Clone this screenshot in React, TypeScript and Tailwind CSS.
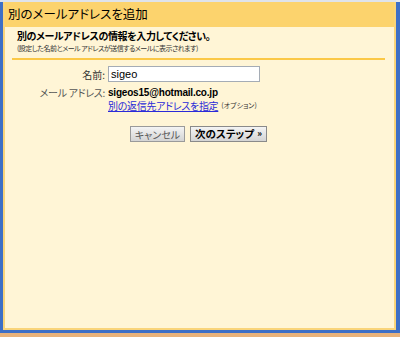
import React from "react";

export default function App() {
  const jp = "[font-family:'Noto_Sans_CJK_JP','Liberation_Sans',sans-serif] [font-feature-settings:'palt']";
  return (
    <div className={`w-[400px] h-[337px] flex flex-col bg-[#e8eaee] ${jp}`}>
      <div className="h-[2px] bg-[#dfe3ea] mr-[4px]" />
      <div className="flex-1 flex flex-col border-l-[3px] border-r-[4px] border-b-[3px] border-[#3d6fc6] ">
        <div className="flex-1 flex flex-col bg-[#fff5d6] border-l-[2px] border-r-[2px] border-b-[2px] border-[#f9d47a]">
          <div className="h-[25px] bg-[#fcd36d] flex items-center pl-[3px] text-[12.5px] text-black leading-none">
            別のメールアドレスを追加
          </div>
          <div className="flex flex-col px-[7px] pt-[2px]">
            <div className="pl-[5px] text-[10px] tracking-[-0.4px] font-bold leading-[14px] text-black">
              別のメールアドレスの情報を入力してください。
            </div>
            <div className="pl-[5px] text-[7px] tracking-[-0.5px] leading-[10px] text-[#333]">
              (設定した名前とメール アドレスが送信するメールに表示されます)
            </div>
            <div className="mt-[5px] h-[2px] bg-[#fbc846] mr-[2px]" />
            <div className="mt-[6px] flex items-center">
              <div className="w-[96px] text-right text-[10px] text-[#333] pr-[3px]">名前:</div>
              <div className="w-[152px] h-[16px] border border-[#a5acb5] bg-white flex items-center pl-[2px] text-[11px] text-black [font-family:'Liberation_Sans',sans-serif]">
                sigeo
              </div>
            </div>
            <div className="mt-[3px] flex items-center h-[14px]">
              <div className="w-[96px] text-right text-[10px] tracking-[-0.3px] text-[#555] pr-[3px]">メール アドレス:</div>
              <div className="text-[10px] tracking-[-0.2px] font-bold text-black [font-family:'Liberation_Sans',sans-serif]">
                sigeos15@hotmail.co.jp
              </div>
            </div>
            <div className="flex items-center h-[13px]">
              <div className="w-[96px]" />
              <span className="text-[10px] tracking-[-0.3px] text-[#2a2ad8] underline">別の返信先アドレスを指定</span>
              <span className="ml-[3px] text-[7px] text-[#333]">(オプション)</span>
            </div>
            <div className="mt-[14px] flex pl-[118px] gap-[5px]">
              <div className="w-[55px] h-[16px] border border-[#9a9a9a] bg-gradient-to-b from-[#f4f4f4] to-[#d4d4d4] flex items-center justify-center text-[10px] text-[#555]">
                キャンセル
              </div>
              <div className="w-[77px] h-[16px] border border-[#8a8a8a] bg-gradient-to-b from-[#f4f4f4] to-[#d4d4d4] flex items-center justify-center text-[10.5px] font-bold text-black">
                次のステップ <span className="ml-[3px] text-[9px]">»</span>
              </div>
            </div>
          </div>
        </div>
      </div>
      <div className="h-[4px] bg-[#e9b27a]" />
    </div>
  );
}
